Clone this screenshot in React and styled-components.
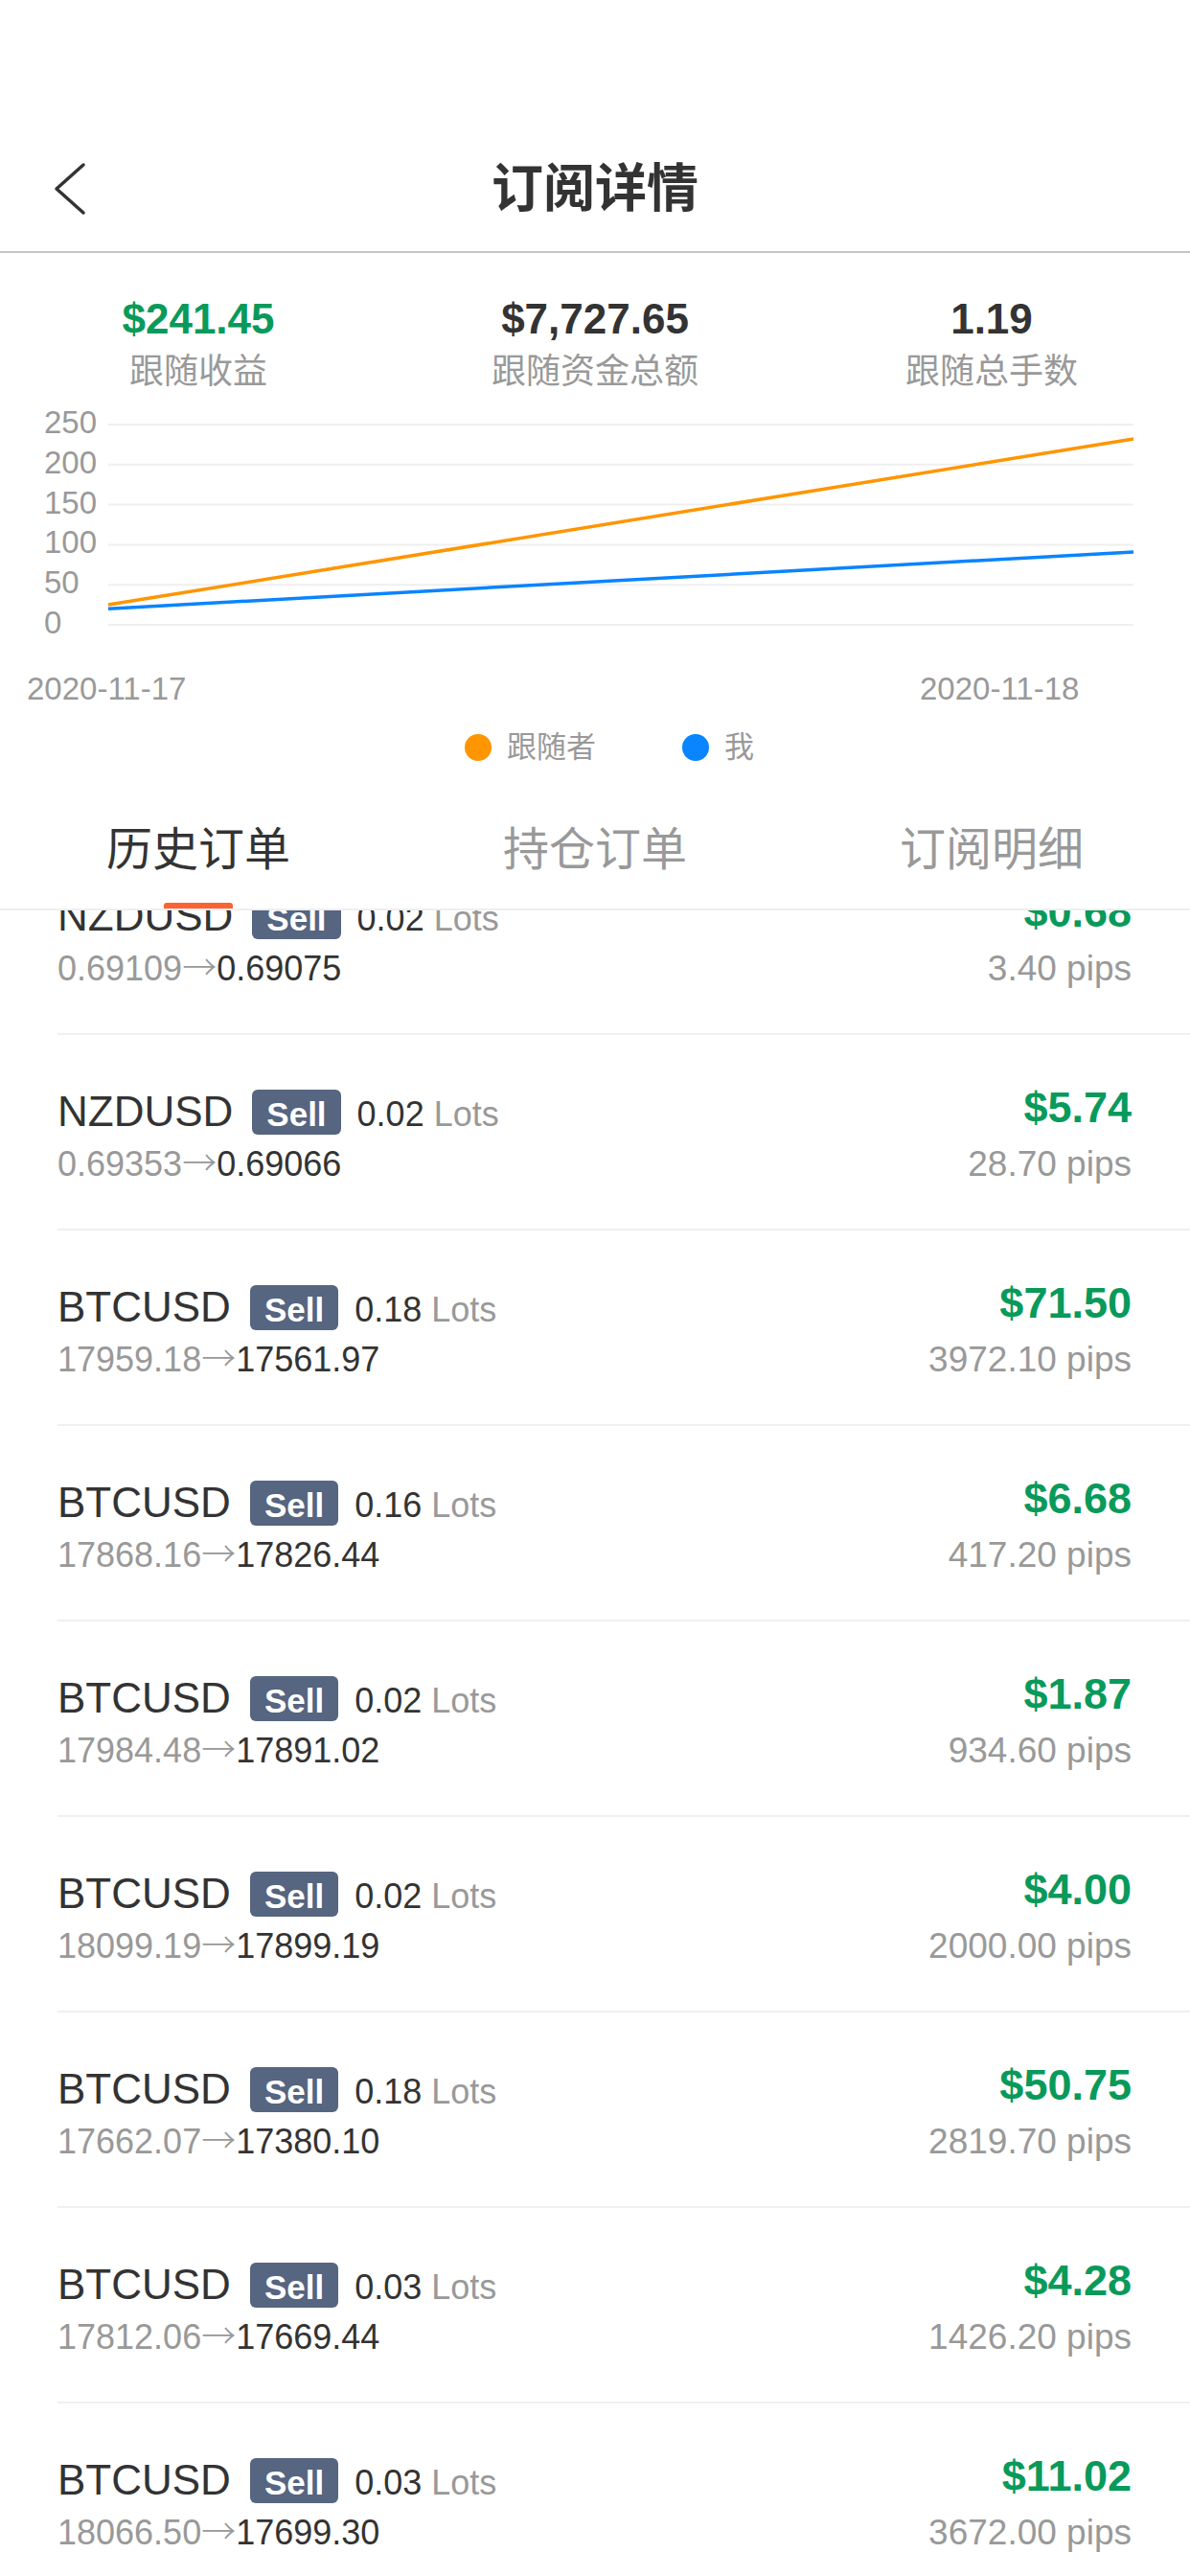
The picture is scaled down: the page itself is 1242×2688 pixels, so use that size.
import styled, { createGlobalStyle } from "styled-components";

const GlobalStyle = createGlobalStyle`
  html, body {
    margin: 0;
    padding: 0;
    background: #fff;
  }
  body {
    font-family: "Liberation Sans", "Noto Sans CJK SC", sans-serif;
    color: #333;
  }
  * {
    box-sizing: border-box;
  }
`;

const Page = styled.div`
  width: 1242px;
  height: 2688px;
  overflow: hidden;
  display: flex;
  flex-direction: column;
  background: #fff;
`;

const NavBar = styled.header`
  margin-top: 132px;
  height: 132px;
  border-bottom: 2px solid #c6c6c6;
  display: grid;
  grid-template-columns: 200px 1fr 200px;
  align-items: center;
`;

const Back = styled.svg`
  margin-left: 55px;
  display: block;
`;

const Title = styled.h1`
  margin: 0;
  text-align: center;
  font-size: 54px;
  font-weight: 600;
  line-height: 1;
  color: #333;
`;

const Stats = styled.section`
  display: grid;
  grid-template-columns: repeat(3, 1fr);
  padding: 43px 0 5px;
`;

const Stat = styled.div`
  display: flex;
  flex-direction: column;
  align-items: center;
`;

const StatValue = styled.div`
  font-size: 44px;
  font-weight: 700;
  line-height: 52px;
  color: ${(p) => (p.$green ? "#089a5b" : "#333")};
`;

const StatLabel = styled.div`
  margin-top: 7px;
  font-size: 36px;
  line-height: 44px;
  color: #999;
`;

const Chart = styled.svg`
  display: block;
  font-family: "Liberation Sans", sans-serif;
`;

const Legend = styled.div`
  height: 70px;
  display: flex;
  justify-content: center;
  align-items: center;
  gap: 90px;
  padding-left: 30px;
`;

const LegendItem = styled.div`
  display: flex;
  align-items: center;
  gap: 16px;
  font-size: 31px;
  line-height: 40px;
  color: #999;
`;

const Dot = styled.span`
  width: 28px;
  height: 28px;
  border-radius: 50%;
  background: ${(p) => p.$color};
`;

const Tabs = styled.nav`
  height: 135px;
  border-bottom: 2px solid #eeeeee;
  display: grid;
  grid-template-columns: repeat(3, 1fr);
`;

const Tab = styled.div`
  display: flex;
  flex-direction: column;
  align-items: center;
  padding-top: 42px;
  font-size: 48px;
  line-height: 60px;
  color: ${(p) => (p.$active ? "#333" : "#999")};
`;

const Indicator = styled.span`
  margin-top: auto;
  width: 72px;
  height: 6px;
  border-radius: 3px 3px 0 0;
  background: #fa6432;
`;

const Viewport = styled.div`
  flex: 1;
  overflow: hidden;
`;

/* list is scrolled a little under the sticky tab bar */
const List = styled.div`
  margin-top: -74px;
`;

const Row = styled.div`
  height: 204px;
  margin-left: 60px;
  padding: 50px 61px 0 0;
  border-bottom: 2px solid #f0f0f0;
  display: flex;
  justify-content: space-between;
  align-items: flex-start;
`;

const Left = styled.div`
  display: flex;
  flex-direction: column;
`;

const Line = styled.div`
  margin-top: 2px;
  height: 56px;
  line-height: 56px;
  display: flex;
  align-items: baseline;
`;

const Symbol = styled.span`
  font-size: 44px;
  color: #333;
`;

const Badge = styled.span`
  margin-left: 20px;
  padding: 4px 15px 0;
  line-height: 43px;
  font-size: 35px;
  font-weight: 700;
  color: #fff;
  background: #566580;
  border-radius: 6px;
`;

const Lots = styled.span`
  margin-left: 17px;
  font-size: 36px;
  color: #333;
`;

const Muted = styled.span`
  color: #999;
`;

const Price = styled.div`
  margin-top: 3px;
  height: 48px;
  font-size: 36px;
  line-height: 48px;
  color: #999;
`;

const Arrow = styled.span`
  font-family: "Noto Sans CJK SC", sans-serif;
  font-weight: 300;
  line-height: 1;
`;

const Dark = styled.span`
  color: #333;
`;

const Right = styled.div`
  display: flex;
  flex-direction: column;
  align-items: flex-end;
`;

const Amount = styled.div`
  font-size: 45px;
  font-weight: 700;
  line-height: 52px;
  color: #089a5b;
`;

const Pips = styled.div`
  margin-top: 9px;
  font-size: 37px;
  line-height: 48px;
  color: #999;
`;

const orders = [
  { sym: "NZDUSD", lots: "0.02", open: "0.69109", close: "0.69075", pnl: "$0.68", pips: "3.40" },
  { sym: "NZDUSD", lots: "0.02", open: "0.69353", close: "0.69066", pnl: "$5.74", pips: "28.70" },
  { sym: "BTCUSD", lots: "0.18", open: "17959.18", close: "17561.97", pnl: "$71.50", pips: "3972.10" },
  { sym: "BTCUSD", lots: "0.16", open: "17868.16", close: "17826.44", pnl: "$6.68", pips: "417.20" },
  { sym: "BTCUSD", lots: "0.02", open: "17984.48", close: "17891.02", pnl: "$1.87", pips: "934.60" },
  { sym: "BTCUSD", lots: "0.02", open: "18099.19", close: "17899.19", pnl: "$4.00", pips: "2000.00" },
  { sym: "BTCUSD", lots: "0.18", open: "17662.07", close: "17380.10", pnl: "$50.75", pips: "2819.70" },
  { sym: "BTCUSD", lots: "0.03", open: "17812.06", close: "17669.44", pnl: "$4.28", pips: "1426.20" },
  { sym: "BTCUSD", lots: "0.03", open: "18066.50", close: "17699.30", pnl: "$11.02", pips: "3672.00" },
];

const stats = [
  { value: "$241.45", label: "跟随收益", green: true },
  { value: "$7,727.65", label: "跟随资金总额" },
  { value: "1.19", label: "跟随总手数" },
];

const tabs = ["历史订单", "持仓订单", "订阅明细"];

// chart area: x 113..1183, value 0 at y 237, 250 at y 28
const X0 = 113;
const X1 = 1183;
const yOf = (v) => 237 - v * (209 / 250);

function ProfitChart() {
  const ticks = [0, 50, 100, 150, 200, 250];
  return (
    <Chart width="1242" height="330" viewBox="0 0 1242 330">
      {ticks.map((t) => (
        <g key={t}>
          <line x1={X0} x2={X1} y1={yOf(t)} y2={yOf(t)} stroke="#efefef" strokeWidth="2" />
          <text x="46" y={yOf(t) + 9} fontSize="33" fill="#999">
            {t}
          </text>
        </g>
      ))}
      <line x1={X0} y1={yOf(25)} x2={X1} y2={yOf(232)} stroke="#ff9500" strokeWidth="3.5" />
      <line x1={X0} y1={yOf(20)} x2={X1} y2={yOf(91)} stroke="#0a84ff" strokeWidth="3.5" />
      <text x="28" y="315" fontSize="33" fill="#999">
        2020-11-17
      </text>
      <text x="960" y="315" fontSize="33" fill="#999">
        2020-11-18
      </text>
    </Chart>
  );
}

export default function App() {
  return (
    <Page>
      <GlobalStyle />
      <NavBar>
        <Back width="36" height="56" viewBox="0 0 36 56">
          <polyline
            points="32,3 4,28 32,53"
            fill="none"
            stroke="#333"
            strokeWidth="3.5"
            strokeLinecap="round"
            strokeLinejoin="round"
          />
        </Back>
        <Title>订阅详情</Title>
        <div />
      </NavBar>

      <Stats>
        {stats.map((s) => (
          <Stat key={s.label}>
            <StatValue $green={s.green}>{s.value}</StatValue>
            <StatLabel>{s.label}</StatLabel>
          </Stat>
        ))}
      </Stats>

      <ProfitChart />

      <Legend>
        <LegendItem>
          <Dot $color="#ff9500" />
          跟随者
        </LegendItem>
        <LegendItem>
          <Dot $color="#0a84ff" />我
        </LegendItem>
      </Legend>

      <Tabs>
        {tabs.map((t, i) => (
          <Tab key={t} $active={i === 0}>
            <span>{t}</span>
            {i === 0 && <Indicator />}
          </Tab>
        ))}
      </Tabs>

      <Viewport>
        <List>
          {orders.map((o, index) => (
            <Row key={index}>
              <Left>
                <Line>
                  <Symbol>{o.sym}</Symbol>
                  <Badge>Sell</Badge>
                  <Lots>
                    {o.lots} <Muted>Lots</Muted>
                  </Lots>
                </Line>
                <Price>
                  {o.open}
                  <Arrow>→</Arrow>
                  <Dark>{o.close}</Dark>
                </Price>
              </Left>
              <Right>
                <Amount>{o.pnl}</Amount>
                <Pips>{o.pips} pips</Pips>
              </Right>
            </Row>
          ))}
        </List>
      </Viewport>
    </Page>
  );
}
